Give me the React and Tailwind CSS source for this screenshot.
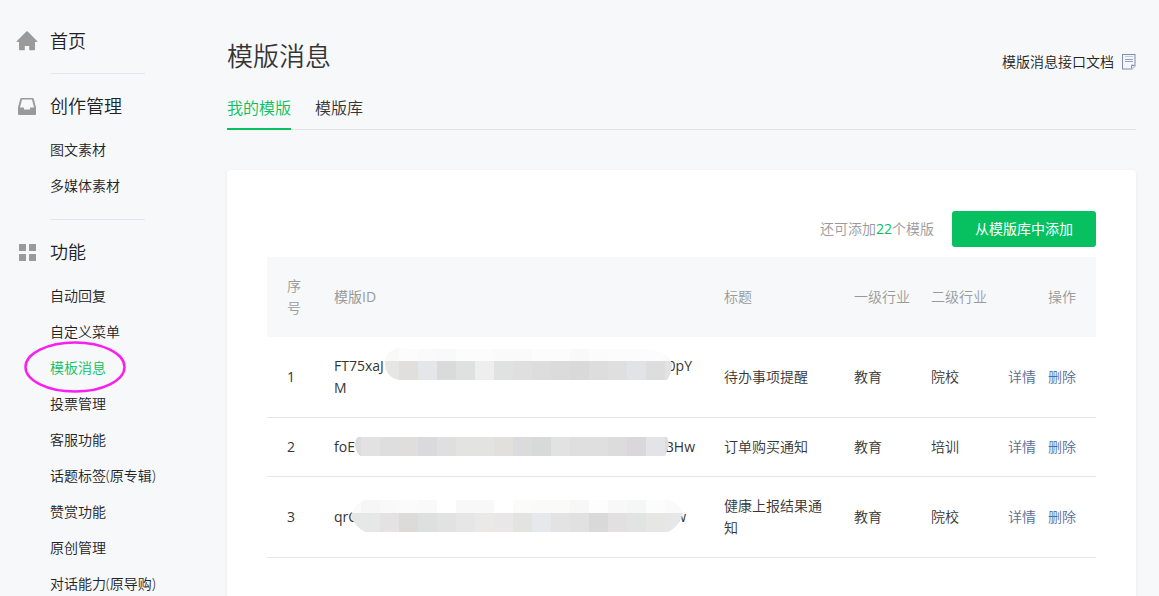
import React, { useState } from 'react';

const HomeIcon = () => (
  <svg viewBox="0 0 22 20" className="h-5 w-[22px]" fill="#9a9a9a" aria-hidden="true">
    <path d="M10.3.6a1 1 0 0 1 1.4 0l9.6 9.6c.4.4.2.8-.3.8H19v7.3a1 1 0 0 1-1 1h-4.8V15H8.8v4.3H4a1 1 0 0 1-1-1V11H1c-.5 0-.7-.4-.3-.8z" />
  </svg>
);

const InboxIcon = () => (
  <svg viewBox="0 0 22 20" className="h-5 w-[22px]" aria-hidden="true">
    <path
      fill="#9a9a9a"
      fillRule="evenodd"
      d="M5.6 2h10.8c.7 0 1.2.3 1.4 1L20 11.5V18c0 .6-.4 1-1 1H3c-.6 0-1-.4-1-1v-6.5L4.2 3c.2-.7.7-1 1.4-1zM6 3.6 4 11.4h3.5c.3 0 .5.2.5.5v1.6h6v-1.6c0-.3.2-.5.5-.5H18l-2-7.8z"
    />
  </svg>
);

const GridIcon = () => (
  <svg viewBox="0 0 22 20" className="h-5 w-[22px]" fill="#9a9a9a" aria-hidden="true">
    <rect x="3" y="2" width="7" height="7" rx="0.5" />
    <rect x="13" y="2" width="7" height="7" rx="0.5" />
    <rect x="3" y="12" width="7" height="7" rx="0.5" />
    <rect x="13" y="12" width="7" height="7" rx="0.5" />
  </svg>
);

const DocIcon = () => (
  <svg viewBox="0 0 14 16" className="h-4 w-3.5" aria-hidden="true">
    <path d="M0 0h14v12l-4 4H0z" fill="#b7c2d6" />
    <path d="M0 0h13v1H1v14H0z" fill="#7d8eb2" />
    <path d="M1 1h11v9.500H9V14H1z" fill="#f4f6fa" />
    <path d="M3 2.5h8" stroke="#c3ccdc" />
    <path d="M3 5.5h8M3 7.5h8" stroke="#94a2c0" />
    <path d="M9.5 14.5v-3h3" fill="#fff" stroke="#7d8eb2" />
  </svg>
);

const menu = [
  { title: '首页', icon: HomeIcon, items: [] },
  { title: '创作管理', icon: InboxIcon, items: ['图文素材', '多媒体素材'] },
  {
    title: '功能',
    icon: GridIcon,
    items: [
      '自动回复',
      '自定义菜单',
      '模板消息',
      '投票管理',
      '客服功能',
      '话题标签(原专辑)',
      '赞赏功能',
      '原创管理',
      '对话能力(原导购)',
    ],
  },
];

const templates = [
  {
    id: 1,
    head: 'FT75xaJ',
    tail: '0pY',
    rest: 'M',
    width: 'w-[358px]',
    title: '待办事项提醒',
    industry: '教育',
    subIndustry: '院校',
    mask: {
      shape: 'M65 1C56 2 51 9 51 17C51 25 57 32 65 33H333Q337 28 338 18C337 8 325 2 308 2H80Q72 2 65 1z',
      split: 14,
      light: ['#f9f9f9', '#f9f9f9', '#f9f9f9', '#fcfcfc', '#fafafa', '#f9f9f9', '#fcfcfc', '#fcfcfc', '#fafafa', '#fafafa', '#fcfcfc', '#fcfcfc', '#f9f9f9', '#fbfbfb', '#fcfcfc', '#fcfcfc', '#fcfcfc', '#fafafa', '#fcfcfc'],
      dark: ['#e6e6e4', '#e6e6e4', '#e6e6e4', '#e0dfdd', '#e4e6e9', '#dadada', '#dfe1e0', '#eeeeee', '#dfe2e0', '#dfdfdf', '#dedddd', '#dbdbdb', '#d9d9d9', '#dddddd', '#dfdfdf', '#e2e3e7', '#dddddd', '#e2e2e2', '#e3e3e3'],
    },
  },
  {
    id: 2,
    head: 'foE',
    tail: 'BHw',
    rest: '',
    width: 'w-[361px]',
    title: '订单购买通知',
    industry: '教育',
    subIndustry: '培训',
    mask: {
      shape: 'M24 9H333Q335 13 335 18L331 28H26Q22 24 21 17Q21 11 24 9z',
      split: 9,
      light: [],
      dark: ['#dcdcdc', '#e2e2e2', '#dedede', '#dfdedc', '#dadadd', '#dfdfdf', '#e3e3e0', '#e3e3e2', '#e1e0dd', '#dbdbdd', '#d8dad9', '#e2e2e2', '#dfdfdf', '#dfdfdf', '#dcdcdc', '#d9d7d9', '#e3e4e7', '#dcdcdb'],
    },
  },
  {
    id: 3,
    head: 'qrO',
    tail: 'w',
    rest: '',
    width: 'w-[352px]',
    title: '健康上报结果通知',
    industry: '教育',
    subIndustry: '院校',
    mask: {
      shape: 'M31 2H334Q346 5 349 15Q345 29 334 34H31Q20 28 17 18Q20 5 31 2z',
      split: 15,
      light: ['#fafafa', '#f5f6f5', '#f9f9f9', '#fbfbfb', '#f9f9f9', '#ffffff', '#f8f8f8', '#f8f8f8', '#ffffff', '#fbfbf9', '#fafaf8', '#fafaf8', '#f7f7f7', '#fdfdfd', '#f8f8f8', '#f5f7f6', '#fcfcfc', '#fafafa'],
      dark: ['#e6e6e6', '#e5e8e6', '#e4e2e3', '#dcdbd9', '#dde0df', '#e2e2e2', '#e6e6e6', '#eae9e7', '#e9e7e8', '#e3e3e1', '#e7e8ec', '#e3e3e3', '#e1e1e1', '#d9d9d9', '#e3e0e1', '#e1e4e3', '#e6e6e4', '#e7e7e7'],
    },
  },
];

// Pixelated strip that hides the middle part of a template ID
const Mosaic = ({ name, shape, split, light, dark }) => (
  <svg viewBox="0 0 370 36" className="absolute -top-2 left-0 h-9 w-[370px] max-w-none" aria-hidden="true">
    <clipPath id={name}>
      <path d={shape} />
    </clipPath>
    <g clipPath={`url(#${name})`} shapeRendering="crispEdges">
      {light.map((color, i) => (
        <rect key={i} x={i * 19 + 8} y={0} width={19} height={split} fill={color} />
      ))}
      {dark.map((color, i) => (
        <rect key={i} x={i * 19 + 8} y={split} width={19} height={19} fill={color} />
      ))}
    </g>
  </svg>
);

const SidebarItem = ({ label, active }) => (
  <li className="flex h-9 items-center">
    <a href="#" className={`relative whitespace-nowrap ${active ? 'text-[#07c160]' : 'text-[#222]'}`}>
      {label}
      {active && (
        <svg
          viewBox="0 0 102 52"
          className="pointer-events-none absolute -top-[17px] -left-[26px] h-[52px] w-[102px] max-w-none"
          fill="none"
          aria-hidden="true"
        >
          <ellipse cx="51" cy="26" rx="49.5" ry="24.5" stroke="#f81ff0" strokeWidth="2.5" />
        </svg>
      )}
    </a>
  </li>
);

const Sidebar = () => (
  <nav className="w-[227px] shrink-0 pt-[9px] text-sm leading-5">
    {menu.map(({ title, icon: Icon, items }, index) => (
      <section key={title}>
        {index > 0 && <hr className="ml-[50px] w-[95px] border-[#e4e6e9]" />}
        <div className="pt-4 pb-4 pl-4">
          <h2>
            <a href="#" className="flex h-8 items-center gap-3 text-lg font-[350] text-[#222]">
              <Icon />
              {title}
            </a>
          </h2>
          {items.length > 0 && (
            <ul className="-mb-px pt-2.5 pl-[34px]">
              {items.map((label) => (
                <SidebarItem key={label} label={label} active={label === '模板消息'} />
              ))}
            </ul>
          )}
        </div>
      </section>
    ))}
  </nav>
);

const TemplateTable = () => (
  <table className="w-full table-fixed border-collapse text-left leading-[22px]">
    <colgroup>
      <col className="w-[47px]" />
      <col />
      <col className="w-[130px]" />
      <col className="w-[77px]" />
      <col className="w-[76px]" />
      <col className="w-[109px]" />
    </colgroup>
    <thead className="bg-[#f6f8f9] text-[#9a9a9a]">
      <tr>
        <th className="py-[18px] pl-5 font-[350]">序号</th>
        <th className="py-[18px] pl-5 font-normal">模版ID</th>
        <th className="py-[18px] pl-5 font-[350]">标题</th>
        <th className="py-[18px] pl-5 font-[350]">一级行业</th>
        <th className="py-[18px] pl-5 font-[350]">二级行业</th>
        <th className="py-[18px] pr-5 text-right font-[350]">操作</th>
      </tr>
    </thead>
    <tbody>
      {templates.map((row) => (
        <tr key={row.id} className="border-b border-[#e4e6e8]">
          <td className="py-[18px] pl-5 font-normal">{row.id}</td>
          <td className="py-[18px] pl-5 font-normal">
            <div className={`relative flex justify-between ${row.width}`}>
              <span>{row.head}</span>
              <span>{row.tail}</span>
              <Mosaic name={`mask-${row.id}`} {...row.mask} />
            </div>
            {row.rest && <div>{row.rest}</div>}
          </td>
          <td className="py-[18px] pl-5">{row.title}</td>
          <td className="py-[18px] pl-5">{row.industry}</td>
          <td className="py-[18px] pl-5">{row.subIndustry}</td>
          <td className="py-[18px] pr-5">
            <div className="flex justify-end gap-3 text-[#576b95]">
              <a href="#">详情</a>
              <a href="#">删除</a>
            </div>
          </td>
        </tr>
      ))}
    </tbody>
  </table>
);

const App = () => {
  const [tab, setTab] = useState('我的模版');

  return (
    <div className="flex min-h-screen bg-[#f7f8fa] font-['Open_Sans','Noto_Sans_CJK_SC',sans-serif] text-sm font-[350] text-[#353535]">
      <Sidebar />
      <main className="flex min-w-0 flex-1 flex-col pt-9 pr-[23px]">
        <header className="flex items-end justify-between">
          <h1 className="text-[26px] leading-10 font-[350]">模版消息</h1>
          <a href="#" className="flex h-7 items-center gap-2 text-[#222]">
            模版消息接口文档
            <DocIcon />
          </a>
        </header>

        {/* Tabs */}
        <div className="mt-5 flex gap-6 border-b border-[#e0e2e4]">
          {['我的模版', '模版库'].map((name) => (
            <button
              key={name}
              type="button"
              onClick={() => setTab(name)}
              className={`-mb-px border-b-2 pb-2 text-base leading-6 ${
                tab === name ? 'border-[#07c160] text-[#07c160]' : 'border-transparent'
              }`}
            >
              {name}
            </button>
          ))}
        </div>

        {/* Template list */}
        <section className="mt-10 flex-1 rounded-t bg-white px-10 pt-[41px] shadow-[0_1px_4px_rgba(0,0,0,0.06)]">
          <div className="mb-2.5 flex items-center justify-end gap-[18px]">
            <p className="text-[#9a9a9a]">
              还可添加<span className="font-normal text-[#07c160]">22</span>个模版
            </p>
            <button type="button" className="h-9 w-36 rounded-[3px] bg-[#07c160] font-normal text-white">
              从模版库中添加
            </button>
          </div>
          <TemplateTable />
        </section>
      </main>
    </div>
  );
};

export default App;
